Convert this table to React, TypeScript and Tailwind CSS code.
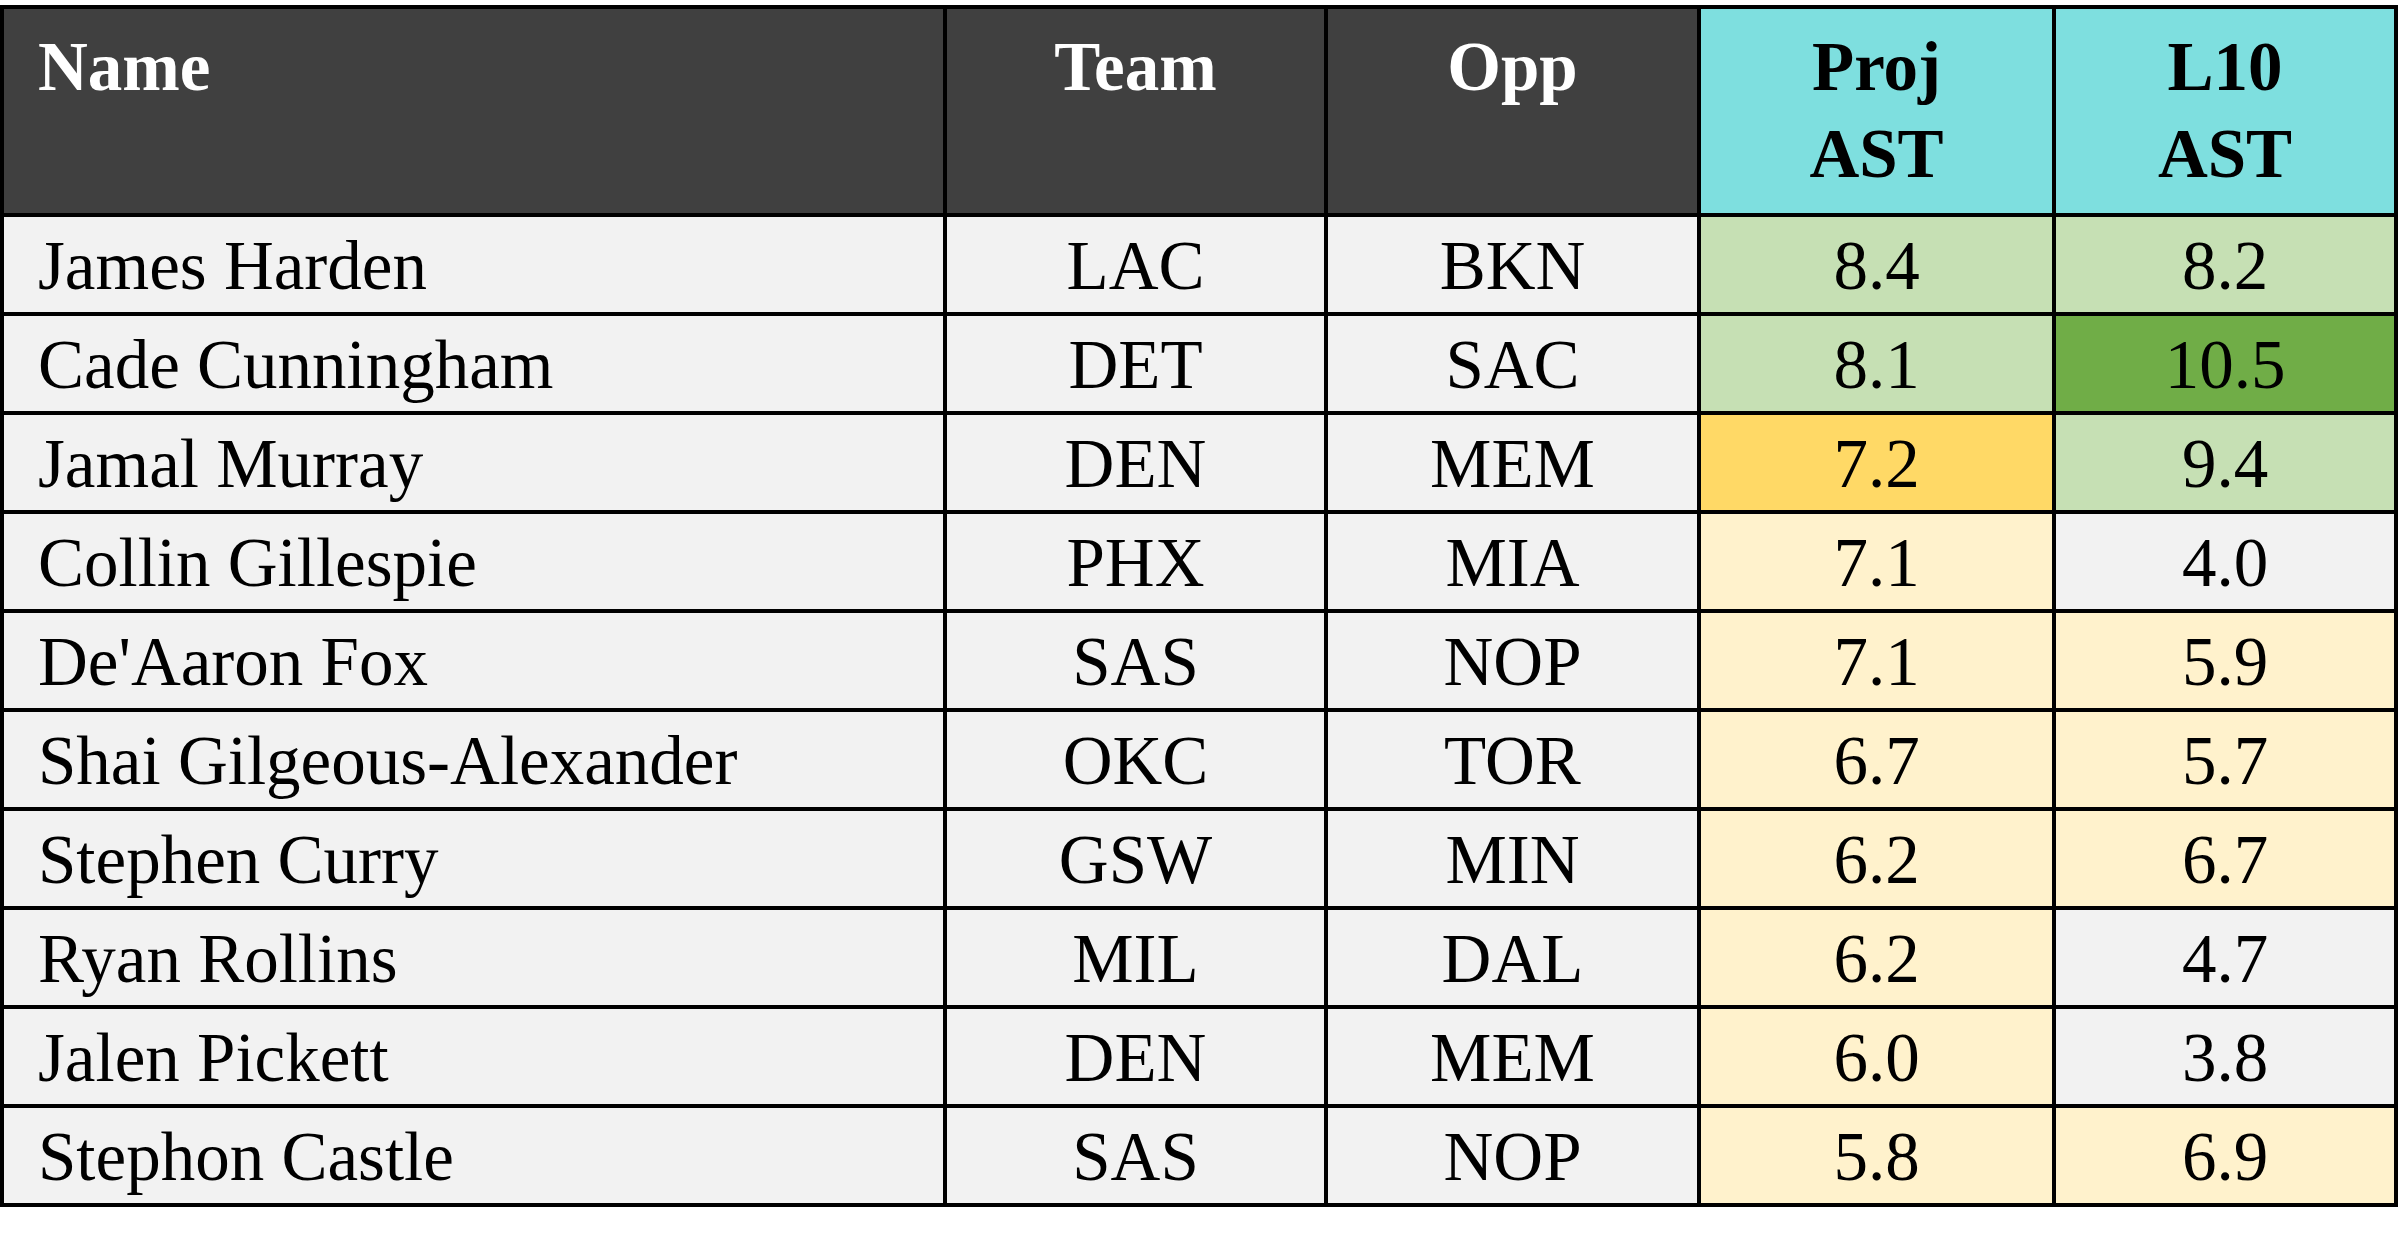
import React from "react";

type Row = { name: string; team: string; opp: string; proj: string; l10: string; pc: string; lc: string };

const G = "bg-[#f2f2f2]";
const LG = "bg-[#c6e0b4]";
const DG = "bg-[#70ad47]";
const GOLD = "bg-[#ffd966]";
const Y = "bg-[#fff2cc]";

const rows: Row[] = [
  { name: "James Harden", team: "LAC", opp: "BKN", proj: "8.4", l10: "8.2", pc: LG, lc: LG },
  { name: "Cade Cunningham", team: "DET", opp: "SAC", proj: "8.1", l10: "10.5", pc: LG, lc: DG },
  { name: "Jamal Murray", team: "DEN", opp: "MEM", proj: "7.2", l10: "9.4", pc: GOLD, lc: LG },
  { name: "Collin Gillespie", team: "PHX", opp: "MIA", proj: "7.1", l10: "4.0", pc: Y, lc: G },
  { name: "De'Aaron Fox", team: "SAS", opp: "NOP", proj: "7.1", l10: "5.9", pc: Y, lc: Y },
  { name: "Shai Gilgeous-Alexander", team: "OKC", opp: "TOR", proj: "6.7", l10: "5.7", pc: Y, lc: Y },
  { name: "Stephen Curry", team: "GSW", opp: "MIN", proj: "6.2", l10: "6.7", pc: Y, lc: Y },
  { name: "Ryan Rollins", team: "MIL", opp: "DAL", proj: "6.2", l10: "4.7", pc: Y, lc: G },
  { name: "Jalen Pickett", team: "DEN", opp: "MEM", proj: "6.0", l10: "3.8", pc: Y, lc: G },
  { name: "Stephon Castle", team: "SAS", opp: "NOP", proj: "5.8", l10: "6.9", pc: Y, lc: Y },
];

export default function App() {
  return (
    <div className="w-[2401px] h-[1245px] bg-white font-['Liberation_Serif',serif] text-[69px] text-black">
      <div className="pt-[5px]">
        <div className="grid w-[2398px] grid-cols-[939px_377px_369px_351px_338px] gap-[4px] bg-black p-[4px]">
          <div className="h-[204px] bg-[#404040] pl-[34px] pt-[15px] font-bold leading-[87px] text-white">Name</div>
          <div className="h-[204px] bg-[#404040] pt-[15px] text-center font-bold leading-[87px] text-white">Team</div>
          <div className="h-[204px] bg-[#404040] pt-[15px] text-center font-bold leading-[87px] text-white">Opp</div>
          <div className="h-[204px] bg-[#7edfdf] pt-[15px] text-center font-bold leading-[87px]">
            <div>Proj</div>
            <div>AST</div>
          </div>
          <div className="h-[204px] bg-[#7edfdf] pt-[15px] text-center font-bold leading-[87px]">
            <div>L10</div>
            <div>AST</div>
          </div>
          {rows.map((r) => (
            <React.Fragment key={r.name}>
              <div className={`flex h-[95px] items-center ${G} pl-[34px] pt-[4px] leading-none`}>{r.name}</div>
              <div className={`flex h-[95px] items-center justify-center ${G} pt-[4px] leading-none`}>{r.team}</div>
              <div className={`flex h-[95px] items-center justify-center ${G} pt-[4px] leading-none`}>{r.opp}</div>
              <div className={`flex h-[95px] items-center justify-center ${r.pc} pt-[4px] leading-none`}>{r.proj}</div>
              <div className={`flex h-[95px] items-center justify-center ${r.lc} pt-[4px] leading-none`}>{r.l10}</div>
            </React.Fragment>
          ))}
        </div>
      </div>
    </div>
  );
}
